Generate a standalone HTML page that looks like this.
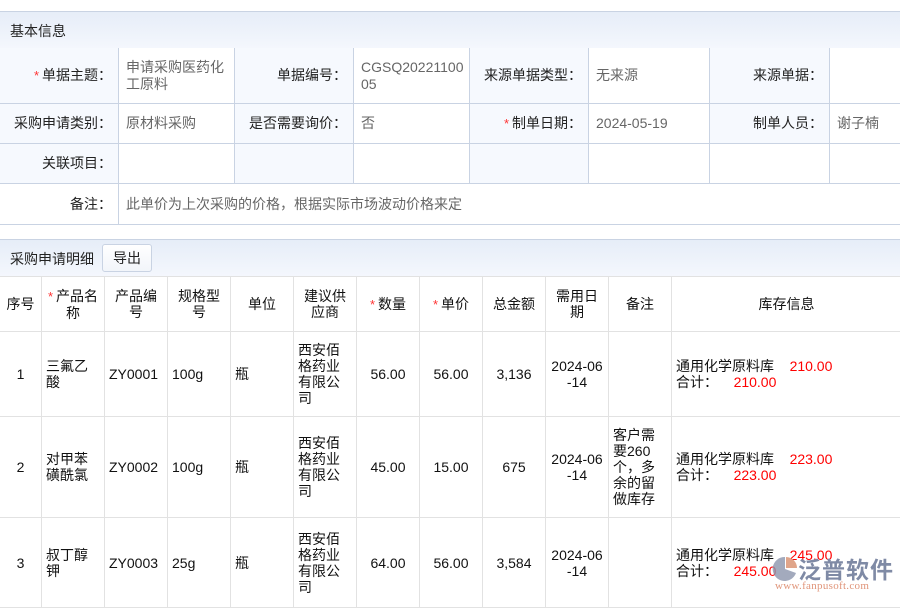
<!DOCTYPE html>
<html><head><meta charset="utf-8"><style>
*{margin:0;padding:0;box-sizing:border-box}
body{width:900px;height:600px;overflow:hidden;background:#fff;font-family:"Liberation Sans","Noto Sans CJK SC",sans-serif;font-size:14px;color:#222;position:relative}
.band{position:absolute;left:0;width:900px;background:linear-gradient(#e6edf8,#f4f7fd);border-top:1px solid #c9d3e3;border-bottom:1px solid #c9d3e3}
.c{position:absolute;border-right:1px solid #c9d3e3;border-bottom:1px solid #c9d3e3;display:flex;align-items:center;line-height:17px}
.l{background:#f6f9fe;justify-content:flex-end;padding-right:6px;color:#222}
.v{background:#fff;padding-left:7px;color:#666}
.r{color:#f33;margin-right:3px;font-size:13px}
table{position:absolute;left:-1px;top:276px;border-collapse:collapse;table-layout:fixed;width:902px}
td{border:1px solid #e2e2e2;line-height:16px;text-align:center;color:#111;vertical-align:middle;padding:0 4px;word-break:break-all}
td.lf{text-align:left}
.red{color:#f00}
</style></head><body>
<div class="band" style="top:11px;height:38px"><span style="position:absolute;left:10px;top:9px">基本信息</span></div>
<div class="c l" style="left:0;top:48px;width:119px;height:56px"><span class="r">*</span>单据主题：</div>
<div class="c v" style="left:119px;top:48px;width:116px;height:56px">申请采购医药化<br>工原料</div>
<div class="c l" style="left:235px;top:48px;width:119px;height:56px">单据编号：</div>
<div class="c v" style="left:354px;top:48px;width:116px;height:56px">CGSQ20221100<br>05</div>
<div class="c l" style="left:470px;top:48px;width:119px;height:56px">来源单据类型：</div>
<div class="c v" style="left:589px;top:48px;width:121px;height:56px">无来源</div>
<div class="c l" style="left:710px;top:48px;width:120px;height:56px">来源单据：</div>
<div class="c v" style="left:830px;top:48px;width:70px;height:56px;border-right:none"></div>
<div class="c l" style="left:0;top:104px;width:119px;height:40px">采购申请类别：</div>
<div class="c v" style="left:119px;top:104px;width:116px;height:40px">原材料采购</div>
<div class="c l" style="left:235px;top:104px;width:119px;height:40px">是否需要询价：</div>
<div class="c v" style="left:354px;top:104px;width:116px;height:40px">否</div>
<div class="c l" style="left:470px;top:104px;width:119px;height:40px"><span class="r">*</span>制单日期：</div>
<div class="c v" style="left:589px;top:104px;width:121px;height:40px">2024-05-19</div>
<div class="c l" style="left:710px;top:104px;width:120px;height:40px">制单人员：</div>
<div class="c v" style="left:830px;top:104px;width:70px;height:40px;border-right:none">谢子楠</div>
<div class="c l" style="left:0;top:144px;width:119px;height:40px">关联项目：</div>
<div class="c v" style="left:119px;top:144px;width:116px;height:40px"></div>
<div class="c l" style="left:235px;top:144px;width:119px;height:40px"></div>
<div class="c v" style="left:354px;top:144px;width:116px;height:40px"></div>
<div class="c l" style="left:470px;top:144px;width:119px;height:40px"></div>
<div class="c v" style="left:589px;top:144px;width:121px;height:40px"></div>
<div class="c l" style="left:710px;top:144px;width:120px;height:40px;background:#fff"></div>
<div class="c v" style="left:830px;top:144px;width:70px;height:40px;border-right:none"></div>
<div class="c l" style="left:0;top:184px;width:119px;height:41px;background:#fff">备注：</div>
<div class="c v" style="left:119px;top:184px;width:781px;height:41px;border-right:none">此单价为上次采购的价格，根据实际市场波动价格来定</div>

<div class="band" style="top:239px;height:38px;border-bottom-color:#e2e2e2">
<span style="position:absolute;left:10px;top:9px">采购申请明细</span>
<span style="position:absolute;left:102px;top:4px;width:50px;height:28px;border:1px solid #c9d3e3;border-radius:3px;background:linear-gradient(#fff,#f2f5fa);text-align:center;line-height:26px">导出</span>
</div>

<table>
<colgroup><col style="width:42px"><col style="width:63px"><col style="width:63px"><col style="width:63px"><col style="width:63px"><col style="width:63px"><col style="width:63px"><col style="width:63px"><col style="width:63px"><col style="width:63px"><col style="width:63px"><col style="width:230px"></colgroup>
<tr style="height:55px"><td>序号</td><td><span class="r">*</span>产品名称</td><td>产品编号</td><td>规格型号</td><td>单位</td><td>建议供应商</td><td><span class="r">*</span>数量</td><td><span class="r">*</span>单价</td><td>总金额</td><td>需用日期</td><td>备注</td><td>库存信息</td></tr>
<tr style="height:85px"><td>1</td><td class="lf">三氟乙酸</td><td class="lf">ZY0001</td><td class="lf">100g</td><td class="lf">瓶</td><td class="lf">西安佰格药业有限公司</td><td>56.00</td><td>56.00</td><td>3,136</td><td>2024-06-14</td><td></td><td class="lf">通用化学原料库 &nbsp;&nbsp;&nbsp;<span class="red">210.00</span><br>合计： &nbsp;&nbsp;&nbsp;<span class="red">210.00</span></td></tr>
<tr style="height:101px"><td>2</td><td class="lf">对甲苯磺酰氯</td><td class="lf">ZY0002</td><td class="lf">100g</td><td class="lf">瓶</td><td class="lf">西安佰格药业有限公司</td><td>45.00</td><td>15.00</td><td>675</td><td>2024-06-14</td><td class="lf">客户需要260个，多余的留做库存</td><td class="lf">通用化学原料库 &nbsp;&nbsp;&nbsp;<span class="red">223.00</span><br>合计： &nbsp;&nbsp;&nbsp;<span class="red">223.00</span></td></tr>
<tr style="height:90px"><td>3</td><td class="lf">叔丁醇钾</td><td class="lf">ZY0003</td><td class="lf">25g</td><td class="lf">瓶</td><td class="lf">西安佰格药业有限公司</td><td>64.00</td><td>56.00</td><td>3,584</td><td>2024-06-14</td><td></td><td class="lf">通用化学原料库 &nbsp;&nbsp;&nbsp;<span class="red">245.00</span><br>合计： &nbsp;&nbsp;&nbsp;<span class="red">245.00</span></td></tr>
</table>

<div style="position:absolute;left:772px;top:553px;width:125px;height:40px">
<svg width="26" height="28" style="position:absolute;left:0;top:2px" viewBox="0 0 26 28"><path d="M13 2 A12 12 0 1 0 24 18 L13 14 Z" fill="#8c95ac" opacity="0.8"/><path d="M14 2 A11 11 0 0 1 25 13 L14 13 Z" fill="#e0a58a"/></svg>
<span style="position:absolute;left:26px;top:-2px;font-size:23px;font-weight:bold;color:#7f8aa5;letter-spacing:1px">泛普软件</span>
<span style="position:absolute;left:3px;top:27px;font-size:11px;font-family:'Liberation Serif',serif;color:#e0957a;letter-spacing:0.3px">www.fanpusoft.com</span>
</div>
</body></html>
